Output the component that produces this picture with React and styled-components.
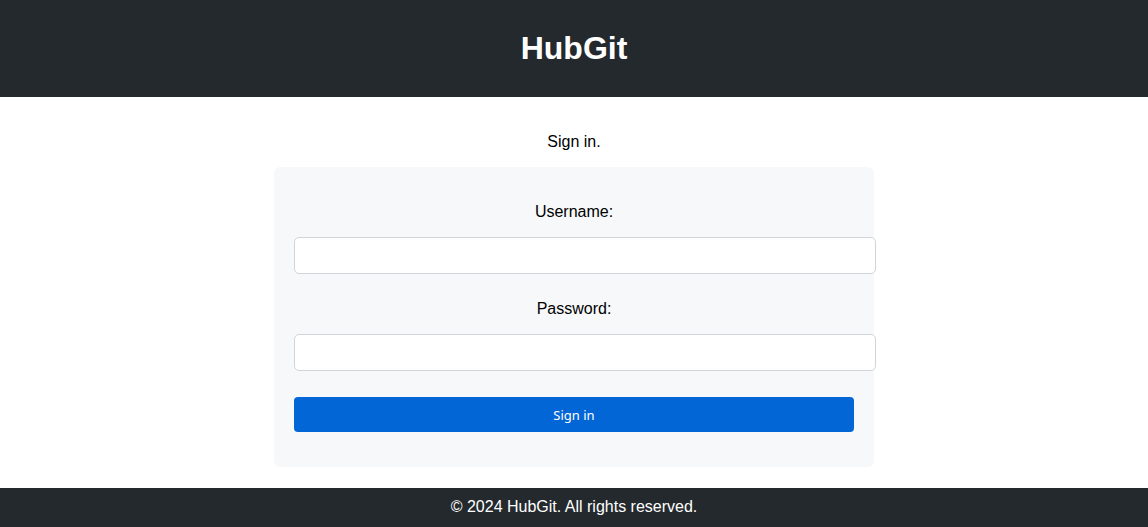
import React from 'react';
import styled, { createGlobalStyle } from 'styled-components';

const GlobalStyle = createGlobalStyle`
  html, body {
    margin: 0;
    padding: 0;
    background: #ffffff;
    font-family: "Liberation Sans", Arial, sans-serif;
    color: #000000;
  }
`;

const Page = styled.div`
  display: flex;
  flex-direction: column;
  min-height: 527px;
`;

const Header = styled.header`
  height: 97px;
  box-sizing: border-box;
  padding-bottom: 2px;
  background: #24292e;
  display: flex;
  align-items: center;
  justify-content: center;
`;

const Title = styled.h1`
  margin: 0;
  color: #ffffff;
  font-size: 32px;
  font-weight: 700;
  line-height: 1;
`;

const Main = styled.main`
  flex: 1;
  display: flex;
  flex-direction: column;
  align-items: center;
  padding: 33px 0 21px;
`;

const Intro = styled.p`
  margin: 0 0 13px;
  font-size: 16px;
  line-height: 24px;
  text-align: center;
`;

const Card = styled.form`
  width: 600px;
  box-sizing: border-box;
  padding: 20px;
  background: #f6f8fa;
  border-radius: 6px;
  display: flex;
  flex-direction: column;
`;

const Label = styled.label`
  display: block;
  text-align: center;
  font-size: 16px;
  line-height: 18px;
  margin: ${(p) => (p.$first ? '16px' : '26px')} 0 16px;
`;

const Input = styled.input`
  display: block;
  width: 100%;
  box-sizing: content-box;
  height: 35px;
  padding: 0 10px;
  margin: 0;
  border: 1px solid #d1d5da;
  border-radius: 5px;
  background: #ffffff;
  font-size: 14px;
  font-family: inherit;
`;

const Button = styled.button`
  margin: 26px 0 15px;
  height: 35px;
  width: 100%;
  border: none;
  border-radius: 4px;
  background: #0366d6;
  color: #ffffff;
  font-family: "Noto Sans", sans-serif;
  font-size: 13px;
  cursor: pointer;
`;

const Footer = styled.footer`
  height: 39px;
  box-sizing: border-box;
  padding-bottom: 2px;
  background: #24292e;
  color: #ffffff;
  display: flex;
  align-items: center;
  justify-content: center;
  font-size: 16px;
`;

export default function App() {
  return (
    <Page>
      <GlobalStyle />
      <Header>
        <Title>HubGit</Title>
      </Header>
      <Main>
        <Intro>Sign in.</Intro>
        <Card onSubmit={(e) => e.preventDefault()}>
          <Label $first htmlFor="username">Username:</Label>
          <Input id="username" type="text" />
          <Label htmlFor="password">Password:</Label>
          <Input id="password" type="password" />
          <Button type="submit">Sign in</Button>
        </Card>
      </Main>
      <Footer>© 2024 HubGit. All rights reserved.</Footer>
    </Page>
  );
}
